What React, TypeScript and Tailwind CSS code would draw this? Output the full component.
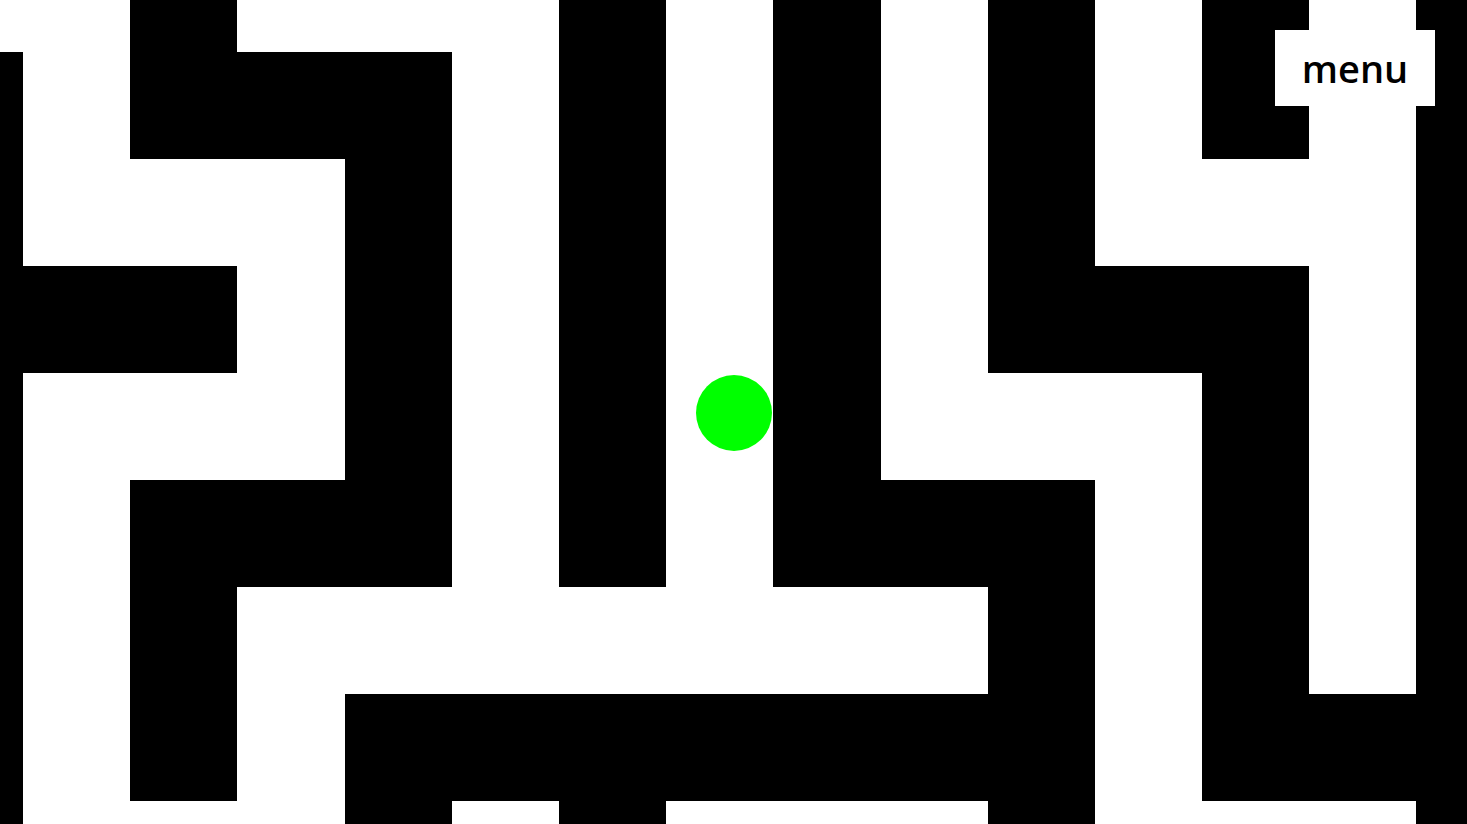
import React from "react";

// rows -1..7, cols -1..13 ; 1 = black
const GRID: string[] = [
  "001000101010101",
  "101110101010101",
  "100010101010001",
  "111010101011101",
  "100010101000101",
  "101110101110101",
  "101000000010101",
  "101011111110111",
  "100010100010001",
];

export default function App() {
  return (
    <div className="relative w-[1467px] h-[824px] overflow-hidden bg-white">
      <div className="grid grid-cols-[repeat(15,107.2px)] grid-rows-[repeat(9,107px)] ml-[-84.2px] mt-[-55px]">
        {GRID.flatMap((row, r) =>
          row.split("").map((c, i) => (
            <div key={`${r}-${i}`} className={c === "1" ? "bg-black" : "bg-white"} />
          ))
        )}
      </div>
      <div className="absolute left-[696px] top-[375px] w-[76px] h-[76px] rounded-full bg-[#00ff00]" />
      <button className="absolute left-[1275px] top-[30px] w-[160px] h-[76px] bg-white flex items-center justify-center text-black text-[38px] font-semibold font-['Open_Sans',sans-serif] leading-none pb-[1px]">
        menu
      </button>
    </div>
  );
}
